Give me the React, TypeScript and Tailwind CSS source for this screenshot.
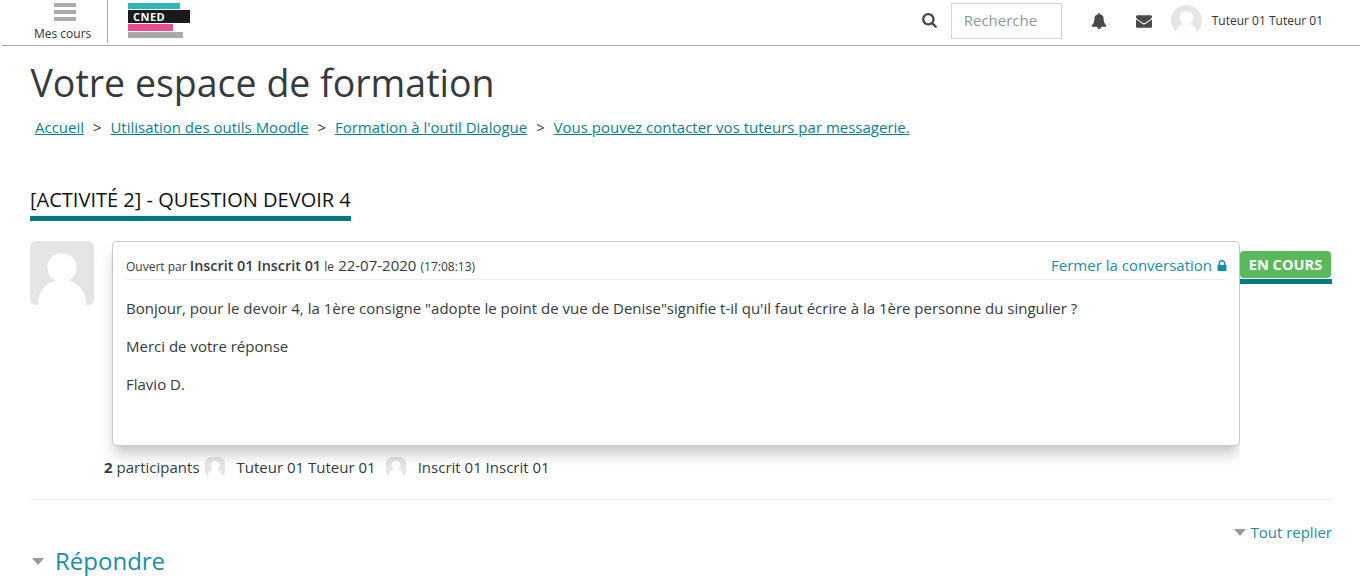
import React from "react";

const Avatar = ({ size, radius }: { size: number; radius: string }) => (
  <svg width={size} height={size} viewBox="0 0 64 64" className={`shrink-0 ${radius}`}>
    <rect width="64" height="64" fill="#e5e5e5" />
    <circle cx="32" cy="26.5" r="14.5" fill="#fff" />
    <path d="M8 64C8 48 18 39 32 39s24 9 24 25z" fill="#fff" />
  </svg>
);

const Caret = ({ className }: { className: string }) => (
  <svg viewBox="0 0 12 7" className={className}>
    <path d="M0 0h12L6 7z" fill="#999" />
  </svg>
);

const Sep = () => <span className="mx-[8.9px] text-[#373a3c]">&gt;</span>;

export default function App() {
  return (
    <div className="h-[580px] w-[1360px] overflow-hidden bg-white text-[#373a3c] font-['Open_Sans',sans-serif]">
      <header className="ml-[2px] flex h-[46px] items-start border-b border-[#a9a9a9] pr-[37px]">
        <div className="flex h-[43px] w-[106px] flex-col border-r border-[#a9a9a9]">
          <div className="ml-[52px] flex h-[26px] flex-col justify-start gap-[3px] pt-[3px]">
            <div className="h-[4px] w-[22px] bg-[#a8acab]" />
            <div className="h-[4px] w-[22px] bg-[#a8acab]" />
            <div className="h-[4px] w-[22px] bg-[#a8acab]" />
          </div>
          <span className="ml-[32px] text-[12px] leading-[16px] text-[#333]">Mes cours</span>
        </div>
        <div className="ml-[20px] flex w-[62px] flex-col pt-[3px]">
          <div className="h-[6px] w-[52px] bg-[#32b8b4]" />
          <div className="mt-[1px] flex h-[13px] w-[62px] items-center bg-[#1a1a1c] pl-[5px] text-[11px] font-bold leading-none tracking-[0.5px] text-white">CNED</div>
          <div className="mt-[1px] h-[7px] w-[45px] bg-[#ea4d92]" />
          <div className="mt-[1px] h-[6px] w-[55px] bg-[#a6aaad]" />
        </div>
        <div className="ml-auto flex h-[41px] items-center">
          <svg viewBox="0 0 1664 1792" className="h-[16px] w-[15px] fill-[#4a4a4a]">
            <path d="M1152 704q0-185-131.500-316.500T704 256 387.500 387.500 256 704t131.500 316.500T704 1152t316.500-131.500T1152 704zm512 832q0 52-38 90t-90 38q-54 0-90-38l-343-342q-179 124-399 124-143 0-273.500-55.500t-225-150-150-225T0 704t55.500-273.500 150-225 225-150T704 0t273.500 55.500 225 150 150 225T1408 704q0 220-124 399l343 343q37 37 37 90z" />
          </svg>
          <div className="ml-[14px] flex h-[36px] w-[111px] items-center border border-[#ced4da] pl-[12px] text-[15px] text-[#8e969d]">Recherche</div>
          <svg viewBox="0 0 1792 1792" className="ml-[29px] h-[16px] w-[16px] fill-[#4a4a4a]">
            <path d="M912 1696q0-16-16-16-59 0-101.500-42.500T752 1536q0-16-16-16t-16 16q0 73 51.500 124.500T896 1712q16 0 16-16zm816-288q0 52-38 90t-90 38h-448q0 106-75 181t-181 75-181-75-75-181H192q-52 0-90-38t-38-90q50-42 91-88t85-119.500 74.500-158.500 50-206T384 576q0-152 117-282.500T808 133q-8-19-8-39 0-40 28-68t68-28 68 28 28 68q0 20-8 39 190 28 307 158.500T1408 576q0 139 19.500 260t50 206 74.500 158.500 85 119.500 91 88z" />
          </svg>
          <svg viewBox="0 0 1792 1792" className="ml-[29px] h-[16px] w-[16px] fill-[#4a4a4a]">
            <path d="M1792 710v794q0 66-47 113t-113 47H160q-66 0-113-47T0 1504V710q44 49 101 87 362 246 497 345 57 42 92.500 65.500t94.500 48 110 24.500h2q51 0 110-24.500t94.500-48 92.500-65.500q170-123 498-345 57-39 100-87zm0-294q0 79-49 151t-122 123q-376 261-468 325-10 7-42.500 30.500t-54 38-52 32.500-57.500 27-50 9h-2q-23 0-50-9t-57.500-27-52-32.500-54-38T639 1015q-91-64-262-182.500T172 690q-62-42-117-115.500T0 438q0-78 41.500-130T160 256h1472q65 0 112.500 47t47.500 113z" />
          </svg>
          <div className="ml-[19px] h-[31px] w-[31px] overflow-hidden rounded-full"><Avatar size={31} radius="" /></div>
          <span className="ml-[10px] text-[12px] leading-none text-[#333]">Tuteur 01 Tuteur 01</span>
        </div>
      </header>

      <main className="pl-[30px] pr-[28px]">
        <h1 className="ml-[0.5px] mt-[10px] text-[37.5px] font-normal leading-[54px] text-[#373a3c]">Votre espace de formation</h1>
        <nav className="ml-[5px] mt-[7px] text-[15px] leading-[21px]">
          <a className="text-[#0a7f8c] underline">Accueil</a><Sep />
          <a className="text-[#0a7f8c] underline">Utilisation des outils Moodle</a><Sep />
          <a className="text-[#0a7f8c] underline">Formation à l'outil Dialogue</a><Sep />
          <a className="text-[#0a7f8c] underline">Vous pouvez contacter vos tuteurs par messagerie.</a>
        </nav>
        <h2 className="mt-[48px] w-fit border-b-[5px] border-[#007a80] pb-[3px] text-[20.05px] font-normal leading-[27px] text-[#111]">[ACTIVITÉ 2] - QUESTION DEVOIR 4</h2>

        <div className="mt-[20px] flex items-start">
          <Avatar size={64} radius="rounded-[6px]" />
          <div className="ml-[18px] h-[205px] w-[1128px] shrink-0 rounded-[5px] border border-[#c9c9c9] bg-white pl-[13px] pr-[12px] shadow-[0_10px_14px_-2px_rgba(0,0,0,0.22)] [clip-path:inset(-30px_0_-30px_-30px)]">
            <div className="flex h-[38px] items-end justify-between border-b border-[#eceeef] pb-[2px]">
              <p className="text-[12px] leading-[20px]">
                Ouvert par <span className="text-[14.4px] font-semibold">Inscrit 01 Inscrit 01</span> le <span className="ml-[1px] text-[15px]">22-07-2020</span> <span className="ml-[1px]">(17:08:13)</span>
              </p>
              <span className="mb-[2px] flex items-center text-[15px] leading-[20px] text-[#1a8ea5]">
                Fermer la conversation
                <svg viewBox="0 0 1152 1408" className="ml-[5px] h-[11px] w-[10px] fill-[#0f8ea8]">
                  <path d="M320 640h512V448q0-106-75-181t-181-75-181 75-75 181v192zm832 96v576q0 40-28 68t-68 28H96q-40 0-68-28t-28-68V736q0-40 28-68t68-28h32V448q0-184 132-316T576 0t316 132 132 316v192h32q40 0 68 28t28 68z" />
                </svg>
              </span>
            </div>
            <div className="pt-[18px] text-[15px] leading-[21px]">
              <p>Bonjour, pour le devoir 4, la 1ère consigne "adopte le point de vue de Denise"signifie t-il qu'il faut écrire à la 1ère personne du singulier ?</p>
              <p className="mt-[17px]">Merci de votre réponse</p>
              <p className="mt-[17px]">Flavio D.</p>
            </div>
          </div>
          <div className="mt-[10px] w-[92px] shrink-0">
            <div className="flex h-[27px] w-[91px] items-center justify-center rounded-[4px] bg-[#5cb85c] text-[14.6px] font-bold leading-none text-white">EN COURS</div>
            <div className="mt-[1px] h-[5px] bg-[#007a80]" />
          </div>
        </div>

        <div className="ml-[74px] mt-[11px] flex h-[20px] items-center text-[15px] leading-[20px]">
          <b className="font-bold">2</b><span className="ml-[4px]">participants</span>
          <div className="ml-[5px] h-[20px] w-[20px] overflow-hidden rounded-[6px]"><Avatar size={20} radius="" /></div>
          <span className="ml-[12px]">Tuteur 01 Tuteur 01</span>
          <div className="ml-[10px] h-[20px] w-[20px] overflow-hidden rounded-[6px]"><Avatar size={20} radius="" /></div>
          <span className="ml-[12px]">Inscrit 01 Inscrit 01</span>
        </div>

        <div className="mt-[22px] border-t border-[#eceeef]" />

        <div className="mt-[22px] flex items-center justify-end text-[15px] leading-[20px] text-[#1a8ea5]">
          <Caret className="mr-[4px] h-[7px] w-[12px]" />Tout replier
        </div>
        <div className="mt-[3px] flex items-center">
          <Caret className="ml-[2px] mr-[11px] h-[7px] w-[12px]" />
          <span className="text-[24px] leading-[32px] text-[#1a8ea5]">Répondre</span>
        </div>
      </main>
    </div>
  );
}
